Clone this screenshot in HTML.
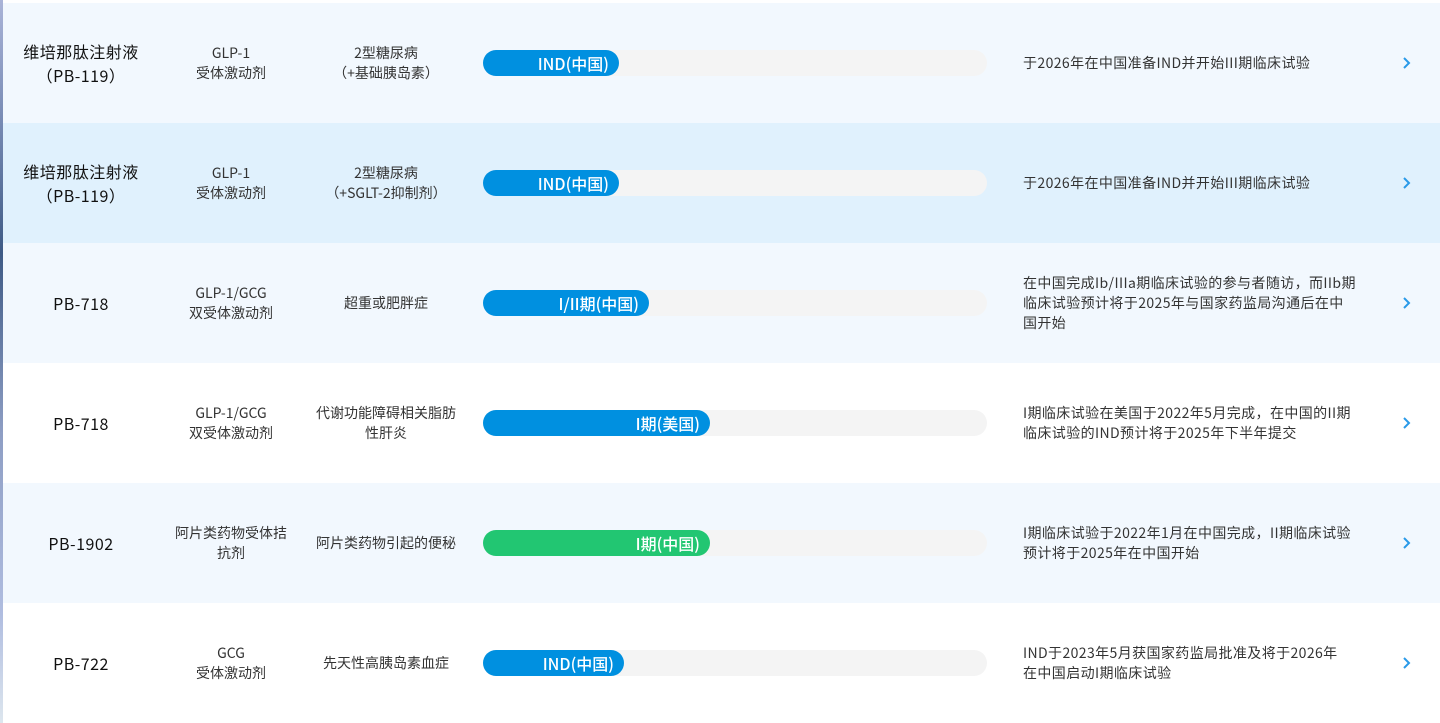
<!DOCTYPE html>
<html><head><meta charset="utf-8"><style>
*{margin:0;padding:0;box-sizing:border-box}
body{width:1440px;height:723px;overflow:hidden;background:#fff;font-family:"Noto Sans CJK SC","Liberation Sans",sans-serif;color:#222;position:relative}
.strip{position:absolute;left:0;top:0;width:3px;height:723px;background:linear-gradient(#aab4d8 0%,#7d8fb8 15%,#3f5b86 35%,#8e9ec4 60%,#b0bde0 85%,#dde6ee 100%);z-index:2}
.row{position:absolute;left:0;width:1440px;height:120px}
.c{position:absolute;text-align:center;top:0;height:120px;display:flex;align-items:center;justify-content:center;white-space:nowrap}
.name{left:11px;width:140px;font-size:16px;line-height:24px;color:#111;letter-spacing:0.5px}
.tgt{left:160px;width:142px;font-size:14px;line-height:20px;color:#333}
.ind{left:310px;width:152px;font-size:14px;line-height:20px;color:#333}
.bar{position:absolute;left:483px;top:47px;width:504px;height:26px;border-radius:13px;background:#f4f4f4}
.fill{position:absolute;left:0;top:0;height:26px;border-radius:13px;background:#0090e0;color:#fff;font-size:16px;line-height:26px;text-align:right;padding-right:10px;font-weight:500;white-space:nowrap}
.desc{position:absolute;left:1023px;width:360px;top:0;height:120px;display:flex;align-items:center;font-size:14px;line-height:20px;color:#333;letter-spacing:0.4px;white-space:nowrap}
.arr{position:absolute;left:1401px;top:53px}
</style></head><body>
<div class="strip"></div>

<div class="row" style="top:3px;background:#f2f8fe">
<div class="c name">维培那肽注射液<br>（PB-119）</div>
<div class="c tgt">GLP-1<br>受体激动剂</div>
<div class="c ind">2型糖尿病<br>（+基础胰岛素）</div>
<div class="bar"><div class="fill" style="width:136px">IND(中国)</div></div>
<div class="desc">于2026年在中国准备IND并开始III期临床试验</div>
<svg class="arr" width="12" height="14" viewBox="0 0 12 14"><path d="M3 2l5 5-5 5" fill="none" stroke="#2a9ae8" stroke-width="2"/></svg>
</div>

<div class="row" style="top:123px;background:#e0f1fd">
<div class="c name">维培那肽注射液<br>（PB-119）</div>
<div class="c tgt">GLP-1<br>受体激动剂</div>
<div class="c ind">2型糖尿病<br>（+SGLT-2抑制剂）</div>
<div class="bar"><div class="fill" style="width:136px">IND(中国)</div></div>
<div class="desc">于2026年在中国准备IND并开始III期临床试验</div>
<svg class="arr" width="12" height="14" viewBox="0 0 12 14"><path d="M3 2l5 5-5 5" fill="none" stroke="#2a9ae8" stroke-width="2"/></svg>
</div>

<div class="row" style="top:243px;background:#f2f8fe">
<div class="c name">PB-718</div>
<div class="c tgt">GLP-1/GCG<br>双受体激动剂</div>
<div class="c ind">超重或肥胖症</div>
<div class="bar"><div class="fill" style="width:166px">I/II期(中国)</div></div>
<div class="desc">在中国完成Ib/IIIa期临床试验的参与者随访，而IIb期<br>临床试验预计将于2025年与国家药监局沟通后在中<br>国开始</div>
<svg class="arr" width="12" height="14" viewBox="0 0 12 14"><path d="M3 2l5 5-5 5" fill="none" stroke="#2a9ae8" stroke-width="2"/></svg>
</div>

<div class="row" style="top:363px;background:#fff">
<div class="c name">PB-718</div>
<div class="c tgt">GLP-1/GCG<br>双受体激动剂</div>
<div class="c ind">代谢功能障碍相关脂肪<br>性肝炎</div>
<div class="bar"><div class="fill" style="width:227px">I期(美国)</div></div>
<div class="desc">I期临床试验在美国于2022年5月完成，在中国的II期<br>临床试验的IND预计将于2025年下半年提交</div>
<svg class="arr" width="12" height="14" viewBox="0 0 12 14"><path d="M3 2l5 5-5 5" fill="none" stroke="#2a9ae8" stroke-width="2"/></svg>
</div>

<div class="row" style="top:483px;background:#f2f8fe">
<div class="c name">PB-1902</div>
<div class="c tgt">阿片类药物受体拮<br>抗剂</div>
<div class="c ind">阿片类药物引起的便秘</div>
<div class="bar"><div class="fill" style="width:227px;background:#22c672">I期(中国)</div></div>
<div class="desc">I期临床试验于2022年1月在中国完成，II期临床试验<br>预计将于2025年在中国开始</div>
<svg class="arr" width="12" height="14" viewBox="0 0 12 14"><path d="M3 2l5 5-5 5" fill="none" stroke="#2a9ae8" stroke-width="2"/></svg>
</div>

<div class="row" style="top:603px;background:#fff">
<div class="c name">PB-722</div>
<div class="c tgt">GCG<br>受体激动剂</div>
<div class="c ind">先天性高胰岛素血症</div>
<div class="bar"><div class="fill" style="width:141px">IND(中国)</div></div>
<div class="desc">IND于2023年5月获国家药监局批准及将于2026年<br>在中国启动I期临床试验</div>
<svg class="arr" width="12" height="14" viewBox="0 0 12 14"><path d="M3 2l5 5-5 5" fill="none" stroke="#2a9ae8" stroke-width="2"/></svg>
</div>
</body></html>
